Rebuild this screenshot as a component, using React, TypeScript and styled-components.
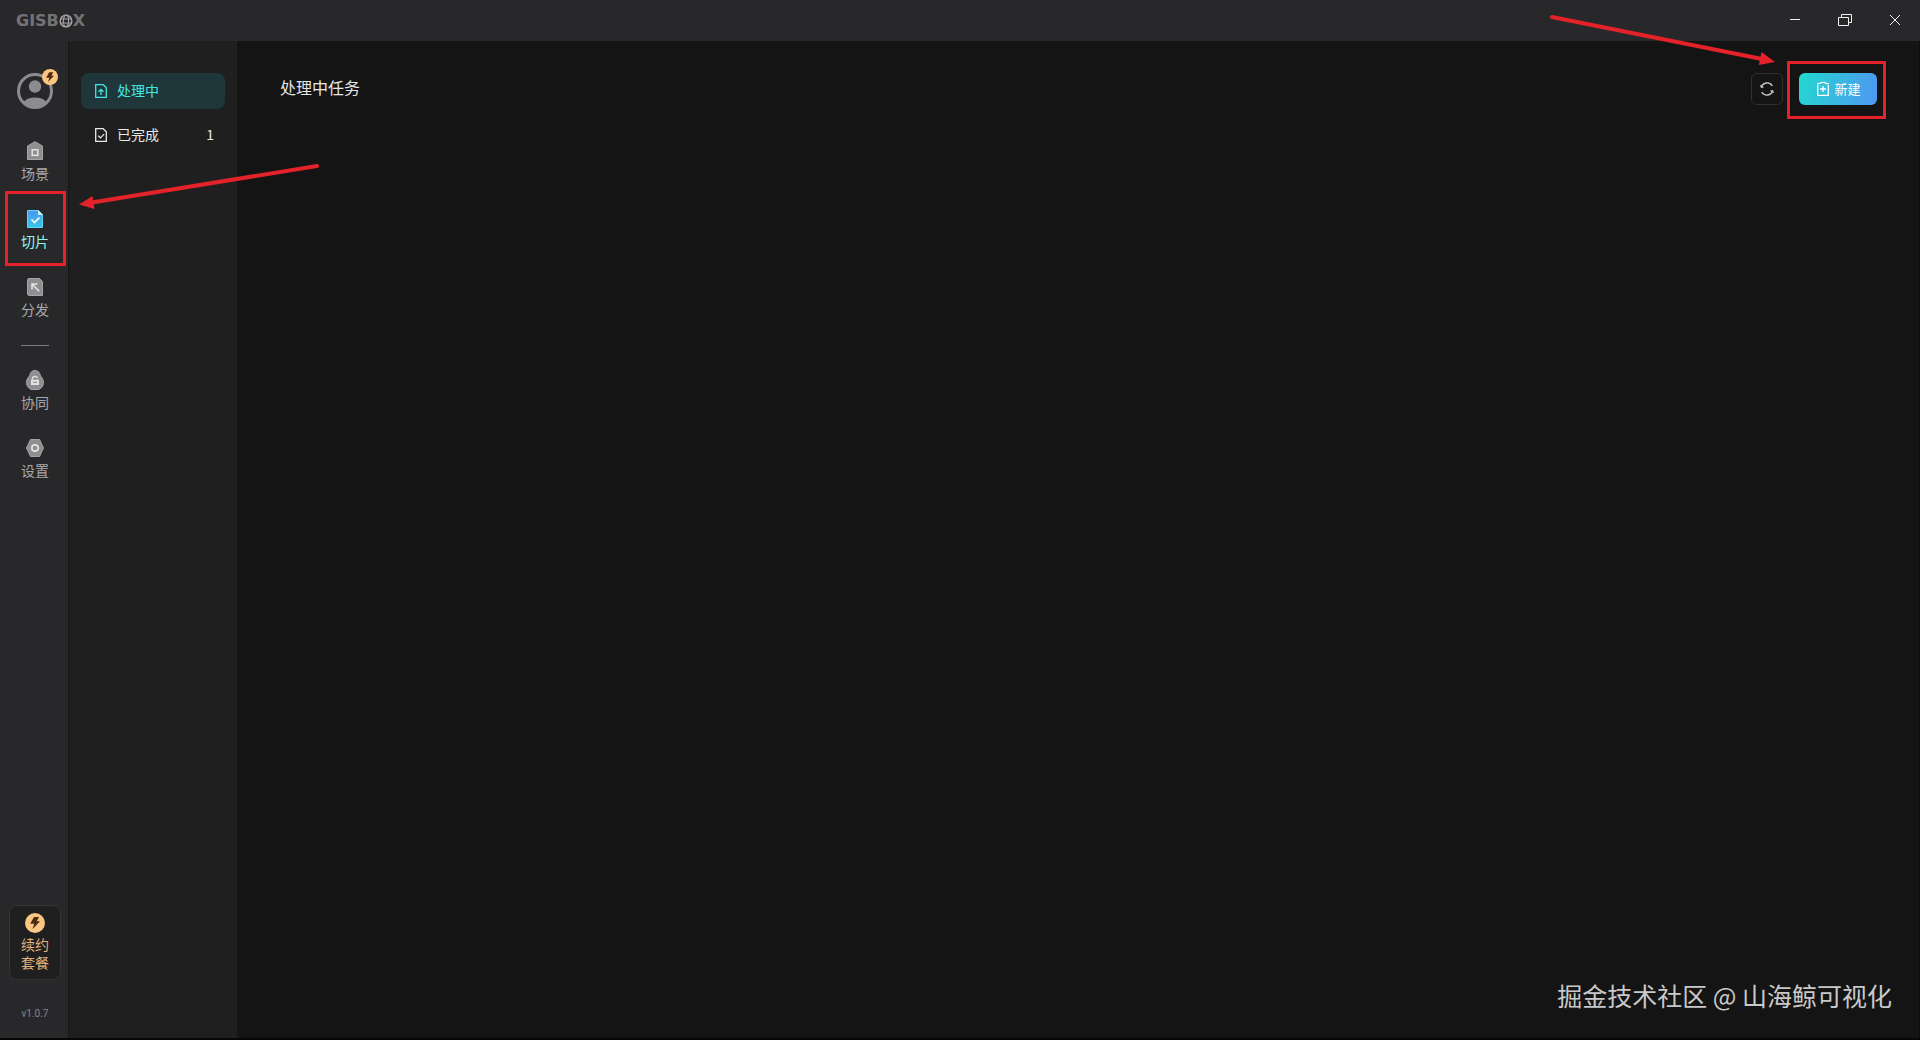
import React from "react";
import styled, { createGlobalStyle } from "styled-components";

const Global = createGlobalStyle`
  *, *::before, *::after { box-sizing: border-box; }
  body {
    margin: 0;
    background: #141414;
    font-family: "Noto Sans CJK SC", "Noto Sans", sans-serif;
    font-size: 14px;
    line-height: 20px;
    color: #e6e6e6;
  }
  button { border: 0; padding: 0; margin: 0; background: none; font: inherit; color: inherit; cursor: pointer; }
  svg { display: block; flex: none; }
`;

const Window = styled.div`
  display: flex;
  flex-direction: column;
  height: 100vh;
  min-height: 640px;
  border-bottom: 2px solid #060606;
`;

const TitleBar = styled.header`
  display: flex;
  align-items: center;
  justify-content: space-between;
  height: 41px;
  padding-left: 16px;
  background: #28282a;
`;

const Brand = styled.h1`
  display: flex;
  align-items: center;
  margin: 0;
  font: 700 16px/20px "DejaVu Sans", sans-serif;
  color: #737375;
`;

const Controls = styled.div`
  display: flex;
  align-self: flex-start;
`;

const ControlButton = styled.button`
  display: grid;
  place-items: center;
  width: 50px;
  height: 40px;
  color: #f2f2f2;
`;

const Body = styled.div`
  display: flex;
  flex: 1;
  min-height: 0;
`;

const Rail = styled.nav`
  display: flex;
  flex-direction: column;
  align-items: center;
  width: 69px;
  padding: 32px 0 14px 2px;
  background: #28282b;
  border-right: 1px solid #161617;
`;

const Avatar = styled.button`
  position: relative;
  width: 36px;
  height: 36px;
  margin-bottom: 32px;
`;

const AvatarBadge = styled.span`
  position: absolute;
  top: -4px;
  right: -5px;
`;

const RailList = styled.div`
  display: flex;
  flex-direction: column;
  align-items: center;
  gap: 24px;
`;

const RailButton = styled.button<{ $active?: boolean }>`
  position: relative;
  display: flex;
  flex-direction: column;
  align-items: center;
  gap: 2px;
  padding-bottom: 2px;
  color: ${(p) => (p.$active ? "#8ff5ea" : "#a9a9ab")};
`;

const Divider = styled.hr`
  width: 28px;
  height: 1px;
  margin: 0;
  border: 0;
  background: #7c7c7e;
`;

const Upgrade = styled.button`
  display: flex;
  flex-direction: column;
  align-items: center;
  width: 52px;
  margin-top: auto;
  padding: 7px 0 8px;
  gap: 2px;
  border: 1px solid #333335;
  border-radius: 8px;
  background: #1f1f20;
  line-height: 18px;
  color: #e3b27c;
`;

const UpgradeText = styled.span`
  width: 28px;
`;

const Version = styled.span`
  margin-top: 24px;
  font: 10px/20px Roboto, sans-serif;
  color: #858587;
`;

const Sidebar = styled.aside`
  display: flex;
  flex-direction: column;
  gap: 8px;
  width: 168px;
  padding: 32px 12px 0;
  background: #1f1f1f;
`;

const SideItem = styled.button<{ $active?: boolean }>`
  display: flex;
  align-items: center;
  gap: 9px;
  height: 36px;
  padding: 0 11px 0 13px;
  border-radius: 8px;
  background: ${(p) => (p.$active ? "#1f373b" : "transparent")};
  color: ${(p) => (p.$active ? "#43e6e0" : "#e8e8e8")};
`;

const SideLabel = styled.span`
  flex: 1;
  padding-bottom: 2px;
  text-align: left;
`;

const Count = styled.span`
  padding-bottom: 2px;
`;

const Main = styled.main`
  display: flex;
  flex-direction: column;
  justify-content: space-between;
  flex: 1;
  padding: 32px 27px 23px 43px;
  background: #141414;
  border-right: 1px solid #0c0c0c;
`;

const Head = styled.div`
  display: flex;
  align-items: center;
  gap: 16px;
  padding-right: 15px;
`;

const Title = styled.h2`
  flex: 1;
  margin: 0;
  padding-bottom: 4px;
  font-size: 16px;
  font-weight: 400;
  line-height: 24px;
  color: #e6e6e6;
`;

const RefreshButton = styled.button`
  display: grid;
  place-items: center;
  width: 32px;
  height: 32px;
  border: 1px solid #303030;
  border-radius: 6px;
  color: #c8c8c8;
`;

const NewButton = styled.button`
  position: relative;
  display: flex;
  align-items: center;
  justify-content: center;
  gap: 4px;
  width: 78px;
  height: 32px;
  padding-left: 1px;
  border-radius: 6px;
  background: linear-gradient(105deg, #22d8d0, #4f97f2);
  font-size: 13px;
  color: #fff;
`;

const Watermark = styled.p`
  align-self: flex-end;
  margin: 0;
  font-size: 25px;
  line-height: 40px;
  color: #c9c9c9;
`;

const Marker = styled.span<{ $inset: string }>`
  position: absolute;
  inset: ${(p) => p.$inset};
  border: 3px solid #e3222a;
  pointer-events: none;
`;

const Arrow = styled.svg<{ $top: string; $left?: string; $right?: string }>`
  position: absolute;
  top: ${(p) => p.$top};
  left: ${(p) => p.$left ?? "auto"};
  right: ${(p) => p.$right ?? "auto"};
  pointer-events: none;
`;

const Bolt = ({ size }: { size: number }) => (
  <svg width={size} height={size} viewBox="0 0 20 20">
    <circle cx="10" cy="10" r="10" fill="#fbc583" />
    <path d="M9 4h5l-2.200 4.300H15L7.500 16.200l1.700-5.400H5.200z" fill="#4d2a0e" />
  </svg>
);

const GlobeIcon = () => (
  <svg width="14" height="14" viewBox="0 0 14 14" fill="none" stroke="#a0a0a2" strokeWidth="1.200">
    <circle cx="7" cy="7" r="5.800" strokeWidth="1.500" />
    <ellipse cx="7" cy="7" rx="2.600" ry="5.800" />
    <path d="M1.500 5h11M1.500 9h11" />
  </svg>
);

const AvatarIcon = () => (
  <svg width="36" height="36" viewBox="0 0 36 36">
    <circle cx="18" cy="18" r="16.500" fill="none" stroke="#8c8c8e" strokeWidth="3" />
    <circle cx="18" cy="13.500" r="6.200" fill="#8c8c8e" />
    <path d="M6 30C9.500 25 14 24.500 18 24.500S26.500 25 30 30C26 35 10 35 6 30z" fill="#8c8c8e" />
  </svg>
);

const SceneIcon = () => (
  <svg width="20" height="20" viewBox="0 0 20 20">
    <path d="M10 0.700L17.500 5v13.500h-15V5z" fill="#8f8f91" stroke="#a5a5a7" />
    <rect x="7.200" y="8.700" width="5.600" height="5.600" fill="none" stroke="#e3e3e4" strokeWidth="1.500" />
  </svg>
);

const SliceIcon = () => (
  <svg width="20" height="20" viewBox="0 0 20 20">
    <defs>
      <linearGradient id="slice" x1="0" y1="0" x2="0" y2="1">
        <stop offset="0" stopColor="#4a97ee" />
        <stop offset="1" stopColor="#35c7e6" />
      </linearGradient>
    </defs>
    <path d="M2.500 1.500h11l4 4v13h-15z" fill="url(#slice)" stroke="#63d3f0" />
    <path d="M13 1l5 5h-5z" fill="#c9f6fa" />
    <path d="M6.500 10.500l3 3 5-5" fill="none" stroke="#fff" strokeWidth="1.700" />
  </svg>
);

const ShareIcon = () => (
  <svg width="20" height="20" viewBox="0 0 20 20">
    <path d="M3.500 1.500h11l3 3v14h-14l-1-1v-15z" fill="#8f8f91" stroke="#a5a5a7" />
    <path d="M7 12.500V7h5.500M7.200 7.200l7 7" fill="none" stroke="#e3e3e4" strokeWidth="1.600" />
  </svg>
);

const TeamIcon = () => (
  <svg width="20" height="20" viewBox="0 0 20 20">
    <path d="M10 .5c3 0 4.700 2 5.300 4.800.3 1.300 3.200 3.500 3.200 7 0 4.200-3 7.200-5.500 7.200H7c-2.500 0-5.500-3-5.500-7.200 0-3.500 2.900-5.700 3.200-7C5.300 2.500 7 .5 10 .5z" fill="#8f8f91" stroke="#a5a5a7" />
    <path d="M7.500 9.500V8.700a2.500 2 0 0 1 5-.6" fill="none" stroke="#e3e3e4" strokeWidth="1.400" />
    <path d="M6 9.700h8v5.300H6z" fill="#e3e3e4" />
    <path d="M8 12.300h4" stroke="#8f8f91" strokeWidth="1.200" />
  </svg>
);

const SettingIcon = () => (
  <svg width="20" height="20" viewBox="0 0 20 20">
    <path d="M5.500 1.500h9l4 8.500-4 8.500h-9L1.500 10z" fill="#8f8f91" stroke="#a5a5a7" strokeLinejoin="round" />
    <circle cx="10" cy="10" r="3.200" fill="none" stroke="#e3e3e4" strokeWidth="1.700" />
  </svg>
);

const FileIcon = ({ kind }: { kind: "up" | "check" }) => (
  <svg width="14" height="16" viewBox="0 0 14 16" fill="none" stroke="currentColor" strokeWidth="1.300">
    <path d="M1.700 1.700h7.500l3.100 3v9.600H1.700z" />
    <path d={kind === "up" ? "M7 12V6.500M4.500 8.800L7 6.300l2.500 2.500" : "M4.300 8.700l2.200 2.200 3.600-3.800"} />
  </svg>
);

const RefreshIcon = () => (
  <svg width="16" height="16" viewBox="0 0 16 16" fill="none" stroke="currentColor" strokeWidth="1.300">
    <path d="M2.200 6.200A6.200 6.200 0 0 1 13.300 4.800M13.800 9.800A6.200 6.200 0 0 1 2.700 11.200" />
    <path d="M1 3.800l1 3.200 3.200-.8zM15 12.200l-1-3.200-3.200.8z" fill="currentColor" stroke="none" />
  </svg>
);

const AddTaskIcon = () => (
  <svg width="14" height="16" viewBox="0 0 14 16" fill="none" stroke="currentColor" strokeWidth="1.300">
    <path d="M1.700 4v10.300h10.600V4M1 2.700h2.200Q7 .2 10.800 2.700H13M7 5v6M4 8h6" />
  </svg>
);

const railTop = [
  { label: "场景", icon: <SceneIcon /> },
  { label: "切片", icon: <SliceIcon />, active: true },
  { label: "分发", icon: <ShareIcon /> },
];

const railBottom = [
  { label: "协同", icon: <TeamIcon /> },
  { label: "设置", icon: <SettingIcon /> },
];

export default function App() {
  return (
    <>
      <Global />
      <Window>
        <TitleBar>
          <Brand>
            GISB
            <GlobeIcon />X
          </Brand>
          <Controls>
            <ControlButton aria-label="最小化">
              <svg width="14" height="14" stroke="currentColor"><path d="M2 6.500h10" /></svg>
            </ControlButton>
            <ControlButton aria-label="还原">
              <svg width="14" height="14" fill="none" stroke="currentColor">
                <path d="M.5 4.500h10v8H.5zM3.500 4.500v-3h10v8h-3" />
              </svg>
            </ControlButton>
            <ControlButton aria-label="关闭">
              <svg width="14" height="14" stroke="currentColor"><path d="M2 2l10 10M12 2L2 12" /></svg>
            </ControlButton>
          </Controls>
        </TitleBar>
        <Body>
          <Rail>
            <Avatar aria-label="账户">
              <AvatarIcon />
              <AvatarBadge><Bolt size={16} /></AvatarBadge>
            </Avatar>
            <RailList>
              {railTop.map((item) => (
                <RailButton key={item.label} $active={item.active}>
                  {item.icon}
                  {item.label}
                  {item.active && (
                    <>
                      <Marker $inset="-18px -17px -13px -16px" />
                      <Arrow $top="-50px" $left="55px" width="250" height="60" viewBox="0 0 250 60">
                        <path d="M241 7L16 43.500" stroke="#e3222a" strokeWidth="4" strokeLinecap="round" />
                        <path d="M3 45.500l13.500-8.500 2 13z" fill="#e3222a" />
                      </Arrow>
                    </>
                  )}
                </RailButton>
              ))}
              <Divider />
              {railBottom.map((item) => (
                <RailButton key={item.label}>
                  {item.icon}
                  {item.label}
                </RailButton>
              ))}
            </RailList>
            <Upgrade>
              <Bolt size={20} />
              <UpgradeText>续约套餐</UpgradeText>
            </Upgrade>
            <Version>v1.0.7</Version>
          </Rail>
          <Sidebar>
            <SideItem $active>
              <FileIcon kind="up" />
              <SideLabel>处理中</SideLabel>
            </SideItem>
            <SideItem>
              <FileIcon kind="check" />
              <SideLabel>已完成</SideLabel>
              <Count>1</Count>
            </SideItem>
          </Sidebar>
          <Main>
            <Head>
              <Title>处理中任务</Title>
              <RefreshButton aria-label="刷新"><RefreshIcon /></RefreshButton>
              <NewButton>
                <AddTaskIcon />
                新建
                <Marker $inset="-12px -9px -14px -12px" />
                <Arrow $top="-63px" $right="98px" width="240" height="60" viewBox="0 0 240 60">
                  <path d="M13 7L223 49" stroke="#e3222a" strokeWidth="4" strokeLinecap="round" />
                  <path d="M236 52l-13.500-10-2.700 13z" fill="#e3222a" />
                </Arrow>
              </NewButton>
            </Head>
            <Watermark>掘金技术社区 @ 山海鲸可视化</Watermark>
          </Main>
        </Body>
      </Window>
    </>
  );
}
